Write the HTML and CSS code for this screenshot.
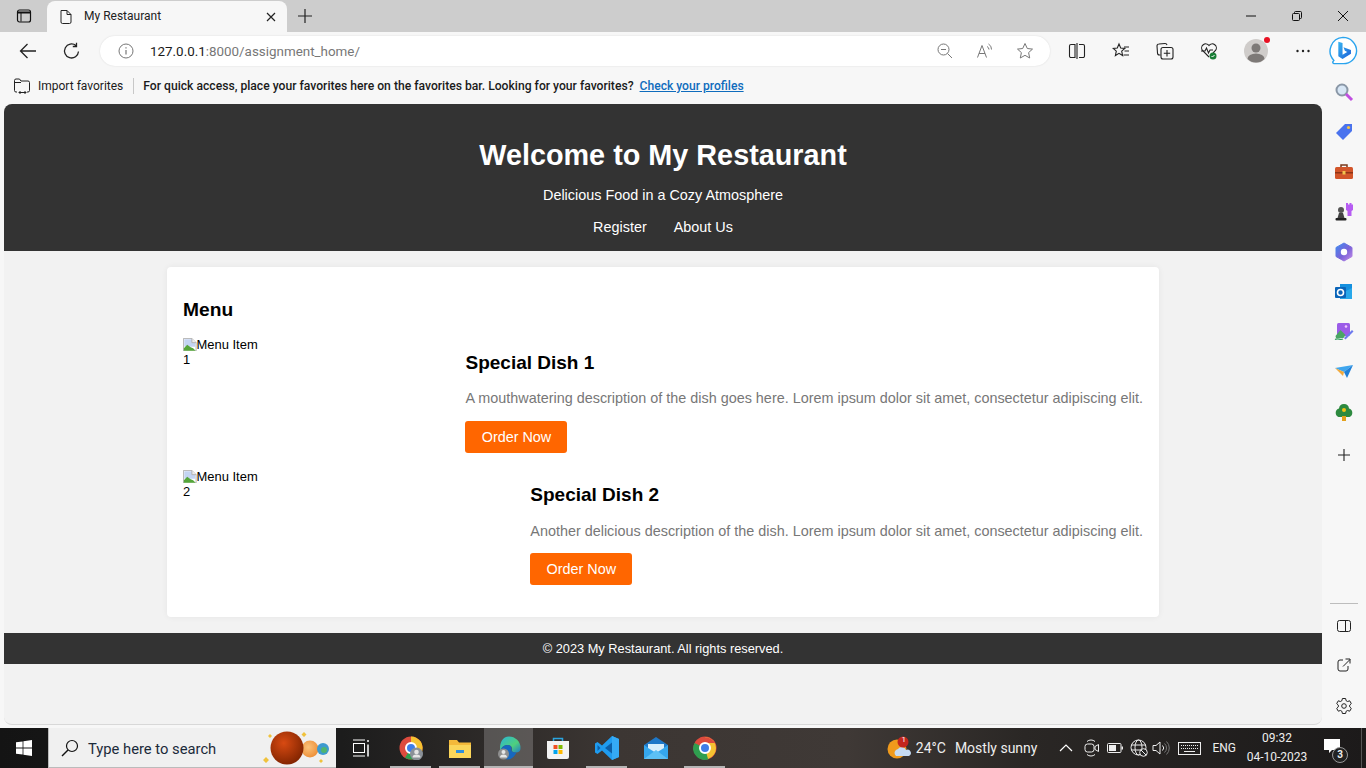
FILE: index.html
```html
<!DOCTYPE html>
<html lang="en">
<head>
<meta charset="utf-8">
<title>My Restaurant</title>
<link rel="stylesheet" href="styles.css">
</head>
<body>
<div class="window">
  <div class="tabstrip">
    <div class="tab-actions"><svg class="ic16" viewBox="0 0 16 16"><rect x="1.500" y="2" width="13" height="12" rx="2" fill="none" stroke="#111" stroke-width="1.200"/><path d="M2 3.500h12v2H5.500V13.500H4.500V5.500H2z" fill="#111"/></svg></div>
    <div class="tab">
      <svg class="ic16" viewBox="0 0 16 16"><path d="M3 1.500h6l4 4V13a1.500 1.500 0 0 1-1.500 1.500h-7A1.500 1.500 0 0 1 3 13zM9 1.500v4h4" fill="none" stroke="#222" stroke-width="1"/></svg>
      <span class="tab-title">My Restaurant</span>
      <svg class="tab-close" viewBox="0 0 10 10"><path d="M1 1l8 8M9 1l-8 8" stroke="#222" stroke-width="1.200"/></svg>
    </div>
    <svg class="new-tab" viewBox="0 0 16 16"><path d="M8 1v14M1 8h14" stroke="#222" stroke-width="1.200"/></svg>
    <div class="win-controls">
      <svg class="ic10" viewBox="0 0 10 10"><path d="M0 5h10" stroke="#111"/></svg>
      <svg class="ic10" viewBox="0 0 10 10"><path d="M.5 3.500a1 1 0 0 1 1-1h5a1 1 0 0 1 1 1v5a1 1 0 0 1-1 1h-5a1 1 0 0 1-1-1zM2.500 2.500v-1a1 1 0 0 1 1-1h5a1 1 0 0 1 1 1v5a1 1 0 0 1-1 1h-1" fill="none" stroke="#111"/></svg>
      <svg class="ic10" viewBox="0 0 10 10"><path d="M0 0l10 10M10 0L0 10" stroke="#111"/></svg>
    </div>
  </div>

  <div class="toolbar">
    <svg class="nav-ic back" viewBox="0 0 18 18"><path d="M17 9H1.500M8.500 2L1.500 9l7 7" fill="none" stroke="#222" stroke-width="1.300"/></svg>
    <svg class="nav-ic reload" viewBox="0 0 18 18"><path d="M15.500 9.500A7 7 0 1 1 13 3.600M13.500 .8v3.700H9.800" fill="none" stroke="#222" stroke-width="1.300"/></svg>
    <div class="address">
      <svg class="info" viewBox="0 0 16 16"><circle cx="8" cy="8" r="7" fill="none" stroke="#777" stroke-width="1"/><path d="M8 7v4.500M8 4.200v1.300" stroke="#777" stroke-width="1.200"/></svg>
      <span class="url"><b>127.0.0.1</b>:8000/assignment_home/</span>
      <div class="addr-tools">
        <svg class="ic16 zoom-ic" viewBox="0 0 16 16"><circle cx="6.500" cy="6.500" r="5.500" fill="none" stroke="#777"/><path d="M4 6.500h5M10.500 10.500L15 15" stroke="#777"/></svg>
        <svg class="ic18" viewBox="0 0 18 18"><path d="M1.500 15.500L6 3.500l4.500 12M3 11.500h6" fill="none" stroke="#777"/><path d="M11 4.500a3.500 3.500 0 0 1 2 3M12.500 2a6 6 0 0 1 3 5.500" fill="none" stroke="#777"/></svg>
        <svg class="ic18" viewBox="0 0 18 18"><path d="M9 1.500l2.300 5 5.200.6-3.900 3.500 1.100 5.400L9 13.300 4.300 16l1.100-5.400L1.500 7.100l5.200-.6z" fill="none" stroke="#777"/></svg>
      </div>
    </div>
    <div class="tools">
      <svg class="ic18" viewBox="0 0 18 18"><path d="M7 2.500H3a1.500 1.500 0 0 0-1.500 1.500v10A1.500 1.500 0 0 0 3 15.500h4zM9 1v16M11 2.500h4A1.500 1.500 0 0 1 16.500 4v10a1.500 1.500 0 0 1-1.500 1.500h-4" fill="none" stroke="#222" stroke-width="1.100"/></svg>
      <svg class="ic18" viewBox="0 0 18 18"><path d="M7 2l1.700 4 4.100.4-3.100 2.800.9 4.300L7 11.300l-3.600 2.200.9-4.300L1.200 6.400 5.300 6zM12 5h5M12.500 9h4.500M11.500 13H17" fill="none" stroke="#222" stroke-width="1.100"/></svg>
      <svg class="ic18" viewBox="0 0 18 18"><path d="M4.500 13H3.500A2 2 0 0 1 1.500 11L1 4A2 2 0 0 1 3 2l6-.5a2 2 0 0 1 2 1.500" fill="none" stroke="#222" stroke-width="1.100"/><rect x="5" y="5.500" width="12" height="11.500" rx="2" fill="none" stroke="#222" stroke-width="1.100"/><path d="M11 8v6.500M7.800 11.200h6.400" stroke="#222" stroke-width="1.100"/></svg>
      <svg class="ic18" viewBox="0 0 18 18"><path d="M9 15L2.500 8.500a4 4 0 0 1 6.500-5 4 4 0 0 1 6.500 5L13 11" fill="none" stroke="#222" stroke-width="1.100"/><path d="M1 9h4l1.500-3 2 5 1.500-3h3" fill="none" stroke="#222" stroke-width="1.100"/><circle cx="13" cy="14" r="3.500" fill="#1a7f37"/><path d="M11.500 14l1 1 2-2" fill="none" stroke="#fff"/></svg>
      <div class="avatar"><svg viewBox="0 0 24 24"><circle cx="12" cy="12" r="12" fill="#cfccca"/><circle cx="12" cy="9" r="4.500" fill="#7d7977"/><path d="M3.500 20a8.500 5.500 0 0 1 17 0 12 12 0 0 1-17 0z" fill="#7d7977"/></svg><span class="avatar-dot"></span></div>
      <svg class="ic18" viewBox="0 0 18 18"><circle cx="3.500" cy="9" r="1.200" fill="#222"/><circle cx="9" cy="9" r="1.200" fill="#222"/><circle cx="14.500" cy="9" r="1.200" fill="#222"/></svg>
    </div>
    <svg class="bing" viewBox="0 0 32 32"><defs><linearGradient id="bingG" x1="0" y1="0" x2="1" y2="1"><stop offset="0" stop-color="#37b5f0"/><stop offset="1" stop-color="#1b5fd8"/></linearGradient></defs><path d="M16 1.500A14.500 14.500 0 0 1 30.500 16 14 14 0 0 1 16 29.500H6.500a1.500 1.500 0 0 1-1-2.500l.8-1A14.500 14.500 0 0 1 16 1.500z" fill="#fff" stroke="#2aa4ee" stroke-width="1.500"/><path d="M11 6l4.500 1.500V20l5-3-2.500-1.200-1.500-3.800 8 3V19l-9 5.500L11 21.500z" fill="url(#bingG)"/></svg>
  </div>

  <div class="content-row">
    <div class="main-col">
      <div class="favbar">
        <svg class="ic18" viewBox="0 0 18 18"><path d="M4 15H3a1.500 1.500 0 0 1-1.500-1.500v-10A1.500 1.500 0 0 1 3 2h3.500l1.500 2h7A1.500 1.500 0 0 1 16.500 5.500v8A1.500 1.500 0 0 1 15 15h-1M1.500 5.500H8M6 15.500h7M7.500 14l-1.500 1.500L7.500 17M11.500 14l1.500 1.500-1.500 1.500" fill="none" stroke="#222"/></svg>
        <span class="fav-import">Import favorites</span>
        <span class="fav-sep"></span>
        <span class="fav-msg">For quick access, place your favorites here on the favorites bar. Looking for your favorites?</span>
        <a class="fav-link" href="#">Check your profiles</a>
      </div>
      <div class="page">
        <header class="site-header">
          <h1>Welcome to My Restaurant</h1>
          <p>Delicious Food in a Cozy Atmosphere</p>
          <nav class="site-nav"><a href="#">Register</a><a href="#">About Us</a></nav>
        </header>
        <main class="card">
          <h2>Menu</h2>
          <div class="item">
            <div class="alt-img"><svg class="broken" viewBox="0 0 16 16"><path d="M.5.500h10l5 5v10H.5z" fill="#fff" stroke="#a8a8a8"/><path d="M1.500 1.500h9v4h4v5h-13z" fill="#c3d4f2"/><path d="M1 15v-3l4-4 4 3 3 1 3 3z" fill="#55a63a"/><path d="M10.500.500v5h5" fill="#eee" stroke="#a8a8a8"/></svg>Menu Item 1</div>
            <div class="item-body">
              <h3>Special Dish 1</h3>
              <p>A mouthwatering description of the dish goes here. Lorem ipsum dolor sit amet, consectetur adipiscing elit.</p>
              <a class="order" href="#">Order Now</a>
            </div>
          </div>
          <div class="item">
            <div class="alt-img"><svg class="broken" viewBox="0 0 16 16"><path d="M.5.500h10l5 5v10H.5z" fill="#fff" stroke="#a8a8a8"/><path d="M1.500 1.500h9v4h4v5h-13z" fill="#c3d4f2"/><path d="M1 15v-3l4-4 4 3 3 1 3 3z" fill="#55a63a"/><path d="M10.500.500v5h5" fill="#eee" stroke="#a8a8a8"/></svg>Menu Item 2</div>
            <div class="item-body">
              <h3>Special Dish 2</h3>
              <p>Another delicious description of the dish. Lorem ipsum dolor sit amet, consectetur adipiscing elit.</p>
              <a class="order" href="#">Order Now</a>
            </div>
          </div>
        </main>
        <footer class="site-footer">© 2023 My Restaurant. All rights reserved.</footer>
      </div>
    </div>
    <aside class="sidebar">
      <svg class="side-ic" viewBox="0 0 20 20"><circle cx="8" cy="8" r="5.500" fill="#d7e6f5" stroke="#8a97a6" stroke-width="2"/><path d="M12 12l6 6" stroke="#c04fe0" stroke-width="3"/></svg>
      <svg class="side-ic" viewBox="0 0 20 20"><path d="M2 11l9-9h7v7l-9 9z" fill="#4a73ee"/><circle cx="14.500" cy="5.500" r="1.600" fill="#f6c343"/></svg>
      <svg class="side-ic" viewBox="0 0 20 20"><path d="M7 5V3h6v2" fill="none" stroke="#7a3a1c" stroke-width="1.500"/><rect x="1" y="5" width="18" height="12" rx="1.500" fill="#d2552a"/><rect x="1" y="10" width="18" height="1.500" fill="#8f3516"/><rect x="8.500" y="9" width="3" height="3.500" fill="#f2c14e"/></svg>
      <svg class="side-ic" viewBox="0 0 20 20"><path d="M12 1h2v1.500h1.500V1h2v1.500H19V8l-1.500 1v5h-4V9L12 8z" fill="#b65cf2"/><circle cx="7" cy="8" r="3" fill="#555"/><path d="M5 11h4l1.500 5h-7z" fill="#444"/><rect x="1.500" y="16" width="11" height="2.500" rx="1" fill="#222"/></svg>
      <svg class="side-ic" viewBox="0 0 20 20"><defs><linearGradient id="m365" x1="0" y1="0" x2="1" y2="1"><stop offset="0" stop-color="#3f8cf0"/><stop offset=".55" stop-color="#7a62d8"/><stop offset="1" stop-color="#c48be8"/></linearGradient></defs><path d="M10 1l8 4.500v9L10 19l-8-4.500v-9z" fill="url(#m365)" stroke="url(#m365)" stroke-linejoin="round" stroke-width="1"/><circle cx="10" cy="10" r="3.200" fill="#fff"/></svg>
      <svg class="side-ic" viewBox="0 0 20 20"><path d="M6 2h12v15H6z" fill="#1490df"/><path d="M12 9l6-3v11H6z" fill="#28a8ea"/><rect x="1" y="5" width="11" height="11" rx="1" fill="#0a64b8"/><circle cx="6.500" cy="10.500" r="3" fill="none" stroke="#fff" stroke-width="1.600"/></svg>
      <svg class="side-ic" viewBox="0 0 20 20"><rect x="3" y="1" width="13" height="13" rx="1.500" fill="#9b5ce8"/><circle cx="12" cy="4.500" r="1.300" fill="#f4c6ff"/><path d="M1.500 14l5-6 5 5-2 3H2z" fill="#4aa564"/><path d="M10 16l8-8 1.500 1.500-8 8z" fill="#6d79ee"/><path d="M1 17.500c3-2 5 1 8-.5" fill="none" stroke="#2e9c58" stroke-width="1.200"/></svg>
      <svg class="side-ic" viewBox="0 0 20 20"><path d="M1 6l18-3-9 7z" fill="#3fa6ee"/><path d="M1 6l9 4-1 4z" fill="#f2a93b"/><path d="M19 3L10 10l3 6z" fill="#2080d8"/></svg>
      <svg class="side-ic" viewBox="0 0 20 20"><path d="M10 2a5 5 0 0 1 5 4.500 4.500 4.500 0 0 1 .5 8.500H4.500A4.500 4.500 0 0 1 5 6.500 5 5 0 0 1 10 2z" fill="#2d8a3f"/><rect x="8" y="14" width="4" height="5" fill="#e4a11c"/><circle cx="10" cy="8" r="2" fill="#f3c316"/></svg>
      <svg class="side-plus" viewBox="0 0 14 14"><path d="M7 1v12M1 7h12" stroke="#222" stroke-width="1.100"/></svg>
      <div class="side-bottom">
        <span class="side-sep"></span>
        <svg class="ic14" viewBox="0 0 14 14"><rect x=".5" y="1.500" width="13" height="11" rx="2" fill="none" stroke="#222"/><path d="M8.500 1.500v11" stroke="#222"/></svg>
        <svg class="ic14" viewBox="0 0 14 14"><path d="M6 2H3a2 2 0 0 0-2 2v7a2 2 0 0 0 2 2h6a2 2 0 0 0 2-2V8M6 8.500L13 1.500M8.500 1H13v4.500" fill="none" stroke="#222"/></svg>
        <svg class="ic18" viewBox="0 0 18 18"><path d="M7.400 1.500h3.200l.5 2.200 1.500.8 2.100-.7 1.600 2.800-1.600 1.500v1.800l1.600 1.500-1.600 2.800-2.100-.7-1.500.8-.5 2.200H7.400l-.5-2.200-1.500-.8-2.100.7-1.600-2.800 1.600-1.500V8.100L1.700 6.600l1.600-2.800 2.100.7 1.500-.8z" fill="none" stroke="#222" stroke-linejoin="round"/><circle cx="9" cy="9" r="2.300" fill="none" stroke="#222"/></svg>
      </div>
    </aside>
  </div>
</div>

<div class="taskbar">
  <div class="start"><svg class="win-logo" viewBox="0 0 16 16"><path d="M0 2.300L6.600 1.400V7.600H0zM7.400 1.300L16 0V7.600H7.400zM0 8.400H6.600V14.600L0 13.700zM7.400 8.400H16V16L7.400 14.700z" fill="#fff"/></svg></div>
  <div class="search">
    <svg class="search-ic" viewBox="0 0 18 18"><circle cx="11" cy="7" r="5.500" fill="none" stroke="#111" stroke-width="1.200"/><path d="M7 11l-6 6" stroke="#111" stroke-width="1.500"/></svg>
    <span class="search-text">Type here to search</span>
    <svg class="search-art" viewBox="-6 0 72 36"><defs><radialGradient id="pl1" cx=".4" cy=".35" r=".7"><stop offset="0" stop-color="#d84a12"/><stop offset="1" stop-color="#7e2300"/></radialGradient><radialGradient id="pl2" cx=".4" cy=".4" r=".7"><stop offset="0" stop-color="#fbc27a"/><stop offset="1" stop-color="#ec8a32"/></radialGradient></defs><circle cx="43" cy="19" r="8.500" fill="url(#pl2)"/><circle cx="56" cy="19" r="6" fill="#3d9ad0"/><circle cx="57" cy="20" r="3" fill="#4fb56f"/><circle cx="20" cy="18" r="16.500" fill="url(#pl1)"/><path d="M37 2l2.500 2.500L37 7l-2.500-2.500zM-1 27l3 3-3 3-3-3zM54 29l2 2-2 2-2-2zM3 4l2 2-2 2-2-2z" fill="#f0c23c"/></svg>
  </div>
  <div class="task-btn first"><svg class="tv-ic" viewBox="0 0 18 18"><path d="M1 1h12M1 17h12" stroke="#fff"/><rect x="1.500" y="4.500" width="11" height="9" fill="none" stroke="#fff"/><path d="M16 1v2M16 5.500v12" stroke="#fff" stroke-width="1.500"/></svg></div>
  <div class="task-btn open"><svg class="app" viewBox="0 0 24 24"><circle cx="12" cy="12" r="11.500" fill="#dd4b3e"/><path d="M12 12L22 18A11.500 11.500 0 0 1 6 21.800z" fill="#2f9e4f"/><path d="M12 .5A11.500 11.500 0 0 1 22.500 17L12 12z" fill="#f5c231"/><circle cx="12" cy="12" r="5" fill="#3f7de8" stroke="#fff" stroke-width="2"/><circle cx="17.500" cy="18" r="6.500" fill="#8a9097"/><circle cx="17.500" cy="16" r="2.300" fill="#e4e4e4"/><path d="M13.500 21.500a4 3 0 0 1 8 0z" fill="#e4e4e4"/></svg></div>
  <div class="task-btn open"><svg class="app" viewBox="0 0 24 24"><path d="M1 4h8l2 2.500h12V22H1z" fill="#f4b93a"/><path d="M1 9h22v13H1z" fill="#fbd65a"/><path d="M8 14h8v3H8z" fill="#2f8fdc"/></svg></div>
  <div class="task-btn active"><svg class="app" viewBox="0 0 24 24"><defs><linearGradient id="edgeG" x1="0" y1="0" x2="1" y2="1"><stop offset="0" stop-color="#2ab6d8"/><stop offset=".6" stop-color="#4fd07c"/><stop offset="1" stop-color="#1f79c8"/></linearGradient></defs><path d="M12 .5a11.500 11.500 0 0 1 11.500 11.500c0 4-3 5-6 4.500-2-.5-3-1.500-2.500-3 .5-2-1-4.500-4.500-4.500-3.500 0-6.500 2.500-7 7C2 10 4 .5 12 .5z" fill="url(#edgeG)"/><path d="M3.500 16c0-4 3-7 7-7 3 0 4.500 2 4 4-.5 2 1 4 5 3.500-2 4.500-5.500 7-9 7-4 0-7-3.500-7-7.500z" fill="#1668c0"/><circle cx="6.500" cy="18" r="5.500" fill="#8f8f8f"/><circle cx="6.500" cy="16" r="2" fill="#e6e6e6"/><path d="M3 21.500a3.500 3 0 0 1 7 0z" fill="#e6e6e6"/></svg></div>
  <div class="task-btn"><svg class="app" viewBox="0 0 24 24"><path d="M7.500 6V2.500h9V6" fill="none" stroke="#2aa5e0" stroke-width="1.500"/><path d="M1 5h22v16a2 2 0 0 1-2 2H3a2 2 0 0 1-2-2z" fill="#f3f3f3"/><rect x="7.500" y="9" width="4" height="4" fill="#f25022"/><rect x="12.500" y="9" width="4" height="4" fill="#7fba00"/><rect x="7.500" y="14" width="4" height="4" fill="#00a4ef"/><rect x="12.500" y="14" width="4" height="4" fill="#ffb900"/></svg></div>
  <div class="task-btn open"><svg class="app" viewBox="0 0 24 24"><path d="M17 0l7 3v18l-7 3-10-9.500L2.500 18 0 16.500V7.500L2.500 6 7 9.500z" fill="#1f9cf0"/><path d="M17 6.500L10 12l7 5.500z" fill="#0c5fa8"/><path d="M2.500 9v6L5.500 12z" fill="#0c5fa8"/><path d="M17 0l7 3v18l-7 3z" fill="#35aaf5"/></svg></div>
  <div class="task-btn"><svg class="app" viewBox="0 0 24 24"><path d="M0 9L12 1l12 8v14H0z" fill="#1e78c8"/><path d="M0 9l12 8 12-8v14H0z" fill="#35a7ee"/><path d="M4 8h16v4l-8 5-8-5z" fill="#d8effc"/><path d="M0 23l12-9 12 9z" fill="#5cc0f5"/></svg></div>
  <div class="task-btn open"><svg class="app" viewBox="0 0 24 24"><circle cx="12" cy="12" r="11.500" fill="#dd4b3e"/><path d="M12 12l4 11A11.500 11.500 0 0 1 1.500 7z" fill="#2f9e4f"/><path d="M12 1A11.500 11.500 0 0 1 23 12a11.500 11.500 0 0 1-8 11L12 12z" fill="#f5c231"/><path d="M2.500 6.500A11.500 11.500 0 0 1 22 7H12z" fill="#dd4b3e"/><circle cx="12" cy="12" r="5" fill="#3f7de8" stroke="#fff" stroke-width="2"/></svg></div>

  <div class="tray">
    <div class="weather-ic"><svg viewBox="0 0 24 24"><circle cx="10" cy="13" r="9.500" fill="#f09a1c"/><path d="M9 20a4 4 0 0 1 2-7 4.500 4.500 0 0 1 8 1 3 3 0 0 1 3 6z" fill="#c6dbf3"/><circle cx="16" cy="6" r="5.500" fill="#c4261d"/></svg><span class="weather-badge">1</span></div>
    <span class="temp">24°C</span>
    <span class="cond">Mostly sunny</span>
    <svg class="caret" viewBox="0 0 14 8"><path d="M1 7l6-6 6 6" fill="none" stroke="#fff" stroke-width="1.200"/></svg>
    <svg class="tr-ic cam" viewBox="0 0 16 18"><path d="M3 2.500a6 6 0 0 1 8 0M3 15.500a6 6 0 0 0 8 0" fill="none" stroke="#eee"/><rect x="1" y="5" width="9" height="8" rx="2.500" fill="none" stroke="#eee"/><path d="M11 7.500l3.500-2v7l-3.500-2z" fill="none" stroke="#eee"/></svg>
    <svg class="tr-ic batt" viewBox="0 0 16 18"><rect x=".5" y="4.500" width="13.500" height="9" rx="1" fill="none" stroke="#eee"/><rect x="2" y="6" width="7" height="6" fill="#eee"/><rect x="14.500" y="7.500" width="1.500" height="3" fill="#eee"/></svg>
    <svg class="tr-ic globe" viewBox="0 0 18 18"><circle cx="8.500" cy="8.500" r="7.500" fill="none" stroke="#eee"/><ellipse cx="8.500" cy="8.500" rx="3.500" ry="7.500" fill="none" stroke="#eee"/><path d="M1 6h15M1 11h15" stroke="#eee"/><circle cx="13.500" cy="13.500" r="3.800" fill="#222" stroke="#eee"/><path d="M11 11l5 5" stroke="#eee"/></svg>
    <svg class="tr-ic vol" viewBox="0 0 18 18"><path d="M1 6.500h3L8 3v12l-4-3.500H1z" fill="none" stroke="#eee"/><path d="M10.500 6.500a3.500 3.500 0 0 1 0 5" fill="none" stroke="#eee"/><path d="M12.500 4.500a6 6 0 0 1 0 9M14.500 2.500a9 9 0 0 1 0 13" fill="none" stroke="#777"/></svg>
    <svg class="tr-key" viewBox="0 0 23 13"><rect x=".5" y=".5" width="22" height="12" fill="none" stroke="#eee"/><path d="M3 3.500h17M3 6.500h17" stroke="#eee" stroke-dasharray="1 1"/><path d="M6 9.500h11" stroke="#eee"/></svg>
    <span class="eng">ENG</span>
    <div class="clock"><span>09:32</span><span>04-10-2023</span></div>
    <div class="notif"><svg viewBox="0 0 18 16"><path d="M1 1h16v11H9l-3 3v-3H1z" fill="#fff"/></svg><span class="notif-badge">3</span></div>
    <span class="show-desk"></span>
  </div>
</div>
</body>
</html>
```
FILE: styles.css
```css
* { box-sizing: border-box; }
html, body { margin: 0; padding: 0; height: 768px; overflow: hidden; }
body { display: flex; flex-direction: column; font-family: Roboto, "Noto Sans", sans-serif; background: #f7f7f7; }
svg { display: block; flex: none; }
a { text-decoration: none; }
.ic10 { width: 10px; height: 10px; }
.ic14 { width: 14px; height: 14px; }
.ic16 { width: 16px; height: 16px; }
.ic18 { width: 18px; height: 18px; }

.window { height: 728px; display: flex; flex-direction: column; }

.tabstrip { height: 32px; background: #cdcdcd; display: flex; align-items: center; flex: none; }
.tab-actions { width: 47px; display: flex; justify-content: center; }
.tab { width: 240px; height: 31px; margin-top: 1px; background: #f7f7f7; border-radius: 8px 8px 0 0; display: flex; align-items: center; padding: 0 11px; }
.tab-title { font-size: 12px; color: #222; margin: 0 0 2px 10px; flex: 1; }
.tab-close { width: 10px; height: 10px; }
.new-tab { width: 16px; height: 16px; margin-left: 10px; }
.win-controls { margin-left: auto; display: flex; align-items: center; gap: 36px; padding-right: 18px; }

.toolbar { height: 38px; flex: none; display: flex; align-items: center; background: #f7f7f7; padding-left: 19px; }
.nav-ic { width: 18px; height: 18px; }
.reload { margin-left: 26px; }
.address { width: 950px; height: 30px; margin-left: 19px; background: #fff; border-radius: 15px; display: flex; align-items: center; padding-left: 18px; box-shadow: 0 0 2px rgba(0,0,0,.12); }
.info { width: 16px; height: 16px; }
.url { margin-left: 16px; font-size: 13.400px; color: #777; }
.url b { font-weight: 400; color: #1b1b1b; }
.addr-tools { margin-left: auto; display: flex; align-items: center; gap: 22px; padding-right: 16px; }
.zoom-ic { margin-right: 1px; }
.tools { display: flex; align-items: center; gap: 26px; margin-left: 18px; }
.avatar { width: 24px; height: 24px; position: relative; }
.avatar-dot { position: absolute; right: -2px; top: -2px; width: 6px; height: 6px; border-radius: 50%; background: #e81123; }
.bing { width: 30px; height: 30px; margin-left: 16px; }

.content-row { flex: 1; display: flex; min-height: 0; }
.main-col { width: 1323px; display: flex; flex-direction: column; }
.favbar { height: 34px; flex: none; display: flex; align-items: center; padding: 0 0 2px 13px; background: #f7f7f7; font-size: 12px; color: #1b1b1b; }
.fav-import { margin-left: 7px; }
.fav-sep { width: 1px; height: 16px; background: #c8c8c8; margin: 0 9px 0 10px; }
.fav-msg { font-weight: 500; font-size: 12.150px; }
.fav-link { margin-left: 6px; color: #0f6cbd; text-decoration: underline; font-weight: 500; font-size: 12.100px; }

.page { flex: 1; width: 1318px; margin: 0 0 3px 4px; background: #f2f2f2; border-radius: 8px; overflow: hidden; border-bottom: 1px solid #d8d8d8; font-family: "Liberation Sans", Arial, sans-serif; font-size: 14.400px; color: #000; }
.site-header { height: 147px; background: #333; color: #fff; text-align: center; padding-top: 33px; }
.site-header h1 { margin: 0; font-size: 28.800px; line-height: 36px; font-weight: 700; }
.site-header p { margin: 14px 0 0; line-height: 17px; }
.site-nav { display: flex; justify-content: center; gap: 27px; margin-top: 15px; }
.site-nav a { color: #fff; line-height: 17px; }

.card { width: 992px; height: 350px; margin: 16px auto; background: #fff; border-radius: 4px; padding: 16px; box-shadow: 0 0 6px rgba(0,0,0,.06); }
.card h2 { margin: 16px 0 15px; font-size: 19.200px; line-height: 22px; font-weight: 700; }
.item { display: flex; justify-content: space-between; height: 116.200px; margin-bottom: 16.200px; }
.alt-img { flex: none; width: 84px; padding-top: 1px; font-size: 12.960px; line-height: 15px; }
.broken { display: inline-block; width: 13.500px; height: 13.500px; vertical-align: -2px; }
.item-body h3 { margin: 16px 0 0; font-size: 19px; line-height: 22px; font-weight: 700; }
.item-body p { margin: 16.300px 0 0; color: #777; line-height: 17px; }
.order { display: inline-block; margin-top: 13.600px; width: 102px; height: 32px; line-height: 32px; text-align: center; color: #fff; background: #f60; border-radius: 3px; }
.site-footer { height: 31px; background: #333; color: #fff; text-align: center; line-height: 32px; font-size: 12.800px; }

.sidebar { flex: 1; display: flex; flex-direction: column; align-items: center; padding: 12px 2px 3px 0; gap: 20px; }
.side-ic { width: 20px; height: 20px; }
.side-plus { width: 14px; height: 14px; margin-top: 6px; }
.side-bottom { margin-top: auto; display: flex; flex-direction: column; align-items: center; gap: 25px; margin-bottom: 10px; }
.side-sep { width: 28px; height: 1px; background: #bdbdbd; margin-bottom: -10px; }

.taskbar { height: 40px; flex: none; display: flex; align-items: stretch; background: linear-gradient(90deg, #141414 0, #1c1c1c 25%, #3c3633 45%, #3f3936 62%, #2a2725 75%, #1c1a1a 100%); color: #fff; }
.start { width: 48px; display: flex; align-items: center; justify-content: center; }
.win-logo { width: 16px; height: 16px; }
.search { width: 288px; background: #f0f0f0; display: flex; align-items: center; padding-left: 12px; color: #1b2a3a; position: relative; border-bottom: 1px solid #bbb; border-left: 1px solid #bbb; }
.search-ic { width: 18px; height: 18px; }
.search-text { margin: 2px 0 0 9px; font-size: 14.750px; }
.search-art { position: absolute; right: 3px; top: 2px; width: 72px; height: 36px; }
.task-btn { width: 49px; display: flex; align-items: center; justify-content: center; position: relative; }
.task-btn.first { width: 50px; }
.task-btn.active { background: rgba(255,255,255,.2); }
.task-btn.open::after, .task-btn.active::after { content: ""; position: absolute; left: 4px; right: 4px; bottom: 0; height: 2px; background: #b5b5b5; }
.task-btn.active::after { left: 0; right: 0; }
.tv-ic { width: 18px; height: 18px; }
.app { width: 24px; height: 24px; }

.tray { margin-left: auto; display: flex; align-items: center; font-size: 14px; color: #eee; }
.weather-ic { width: 24px; height: 24px; position: relative; }
.weather-badge { position: absolute; right: 1px; top: -1px; font-size: 8px; line-height: 10px; color: #fff; width: 12px; text-align: center; }
.temp { margin-left: 5px; }
.cond { margin-left: 9px; }
.caret { width: 14px; height: 8px; margin-left: 22px; }
.tr-ic { width: 16px; height: 18px; }
.cam { margin-left: 11px; }
.batt { margin-left: 7px; }
.globe { width: 18px; margin-left: 7px; }
.vol { width: 18px; margin-left: 4px; }
.tr-key { width: 23px; height: 13px; margin-left: 8px; }
.eng { font-size: 12px; margin-left: 11px; }
.clock { width: 70px; margin-left: 6px; display: flex; flex-direction: column; align-items: center; font-size: 12px; line-height: 19px; }
.notif { width: 20px; height: 20px; margin-left: 11px; position: relative; }
.notif svg { width: 18px; height: 16px; }
.notif-badge { position: absolute; right: -5px; bottom: -5px; width: 16px; height: 16px; border: 1px solid #999; border-radius: 50%; background: #222; font-size: 10px; font-weight: 700; line-height: 14px; text-align: center; color: #eee; }
.show-desk { width: 1px; height: 40px; background: #555; margin-left: 18px; margin-right: 4px; }
```
